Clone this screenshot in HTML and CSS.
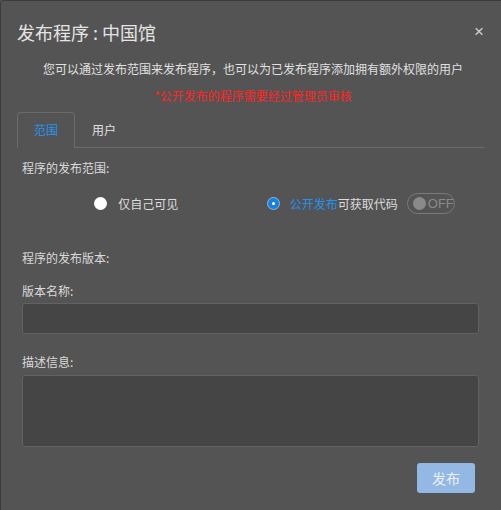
FILE: index.html
```html
<!DOCTYPE html>
<html lang="zh">
<head>
<meta charset="utf-8">
<link rel="stylesheet" href="styles.css">
</head>
<body>
<div class="modal">
  <div class="header">
    <h1 class="title">发布程序 : 中国馆</h1>
    <span class="close">×</span>
  </div>
  <p class="intro">您可以通过发布范围来发布程序，也可以为已发布程序添加拥有额外权限的用户</p>
  <p class="warn">*公开发布的程序需要经过管理员审核</p>
  <div class="tabs">
    <div class="tab active">范围</div>
    <div class="tab">用户</div>
  </div>
  <div class="pane">
    <div class="label first">程序的发布范围:</div>
    <div class="radios">
      <div class="opt">
        <span class="radio"></span>
        <span class="opt-text">仅自己可见</span>
      </div>
      <div class="opt second">
        <span class="radio checked"></span>
        <span class="opt-text"><span class="blue">公开发布</span>可获取代码</span>
        <span class="toggle"><span class="knob"></span><span class="off">OFF</span></span>
      </div>
    </div>
    <div class="label ver">程序的发布版本:</div>
    <div class="label name">版本名称:</div>
    <div class="input"></div>
    <div class="label desc">描述信息:</div>
    <div class="textarea"></div>
    <div class="footer">
      <button class="btn">发布</button>
    </div>
  </div>
</div>
</body>
</html>
```
FILE: styles.css
```css
html, body {
  margin: 0;
  padding: 0;
  background: #545454;
  overflow: hidden;
}
body {
  font-family: "Noto Sans CJK SC", "Noto Sans", sans-serif;
  color: #dcdcdc;
}
.modal {
  width: 506px;
  height: 520px;
  box-sizing: border-box;
  border: 1px solid #3c3c3c;
  border-radius: 4px;
  background: #545454;
  padding: 0 16px 0 16px;
}
.header {
  display: flex;
  align-items: center;
  justify-content: space-between;
  padding-top: 17px;
  height: 28px;
  padding-right: 5px;
}
.title {
  margin: 0;
  font-size: 18px;
  font-weight: normal;
  line-height: 28px;
  color: #e4e4e4;
}
.close {
  font-family: "Liberation Sans", sans-serif;
  font-size: 17px;
  color: #cfcfcf;
  line-height: 28px;
}
.intro {
  margin: 13px 0 0;
  font-size: 12px;
  line-height: 20px;
  text-align: center;
  color: #e0e0e0;
}
.warn {
  margin: 7px 0 0;
  font-size: 12px;
  line-height: 20px;
  text-align: center;
  color: #ff2424;
}
.tabs {
  display: flex;
  margin-top: 6px;
  border-bottom: 1px solid #6b6b6b;
  width: 467px;
}
.tab {
  height: 34px;
  line-height: 34px;
  padding: 0 16px;
  font-size: 12px;
  color: #e0e0e0;
  border: 1px solid transparent;
  border-bottom: none;
  border-radius: 4px 4px 0 0;
  margin-bottom: -1px;
}
.tab.active {
  color: #2293f0;
  border-color: #6b6b6b;
  background: #545454;
  height: 35px;
}
.pane {
  padding: 0 5px;
  width: 457px;
}
.label {
  font-size: 12px;
  line-height: 20px;
  color: #dadada;
}
.label.first { margin-top: 10px; }
.radios {
  display: grid;
  grid-template-columns: 1fr 1fr;
  margin-top: 13px;
  height: 24px;
}
.opt {
  display: flex;
  align-items: center;
  justify-content: center;
  font-size: 12px;
}
.opt.second { padding-right: 8px; }
.radio {
  width: 13px;
  height: 13px;
  border-radius: 50%;
  background: #ffffff;
  margin-right: 11px;
  box-sizing: border-box;
}
.radio.checked {
  background: #1a80e0;
  border: 1px solid #8fb6e0;
  position: relative;
  margin-right: 10px;
}
.radio.checked::after {
  content: "";
  position: absolute;
  left: 4px;
  top: 4px;
  width: 3px;
  height: 3px;
  background: #fff;
  border-radius: 50%;
}
.opt-text { color: #dcdcdc; }
.blue { color: #2293f0; }
.toggle {
  display: inline-flex;
  align-items: center;
  margin-left: 9px;
  width: 48px;
  height: 21px;
  box-sizing: border-box;
  border: 1px solid #7a7a7a;
  border-radius: 11px;
  padding-left: 5px;
}
.knob {
  width: 13px;
  height: 13px;
  border-radius: 50%;
  background: #8a8a8a;
}
.off {
  font-family: "Liberation Sans", sans-serif;
  font-size: 13px;
  color: #8a8a8a;
  margin-left: 2px;
}
.label.ver { margin-top: 33px; }
.label.name { margin-top: 13px; }
.input {
  margin-top: 2px;
  height: 31px;
  box-sizing: border-box;
  background: #454545;
  border: 1px solid #626262;
  border-radius: 3px;
}
.label.desc { margin-top: 18px; }
.textarea {
  margin-top: 3px;
  height: 72px;
  box-sizing: border-box;
  background: #454545;
  border: 1px solid #626262;
  border-radius: 3px;
}
.footer {
  display: flex;
  justify-content: flex-end;
  margin-top: 16px;
  padding-right: 4px;
}
.btn {
  width: 58px;
  height: 30px;
  border: none;
  border-radius: 3px;
  background: #93b8e3;
  color: #eaf0f7;
  font-family: "Noto Sans CJK SC", sans-serif;
  font-size: 14px;
  padding: 0;
}
```
